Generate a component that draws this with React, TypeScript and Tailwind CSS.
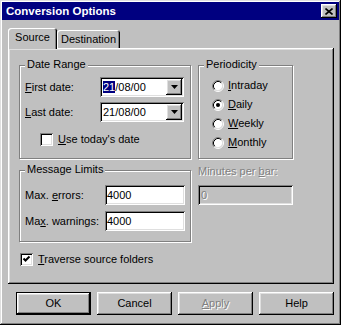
import React from "react";

const raised =
  "shadow-[inset_-1px_-1px_#000,inset_1px_1px_#fff,inset_-2px_-2px_#808080,inset_2px_2px_#dfdfdf]";
const sunken =
  "shadow-[inset_1px_1px_#808080,inset_-1px_-1px_#fff,inset_2px_2px_#000,inset_-2px_-2px_#dfdfdf]";
const disabledText = "text-[#808080] [text-shadow:1px_1px_0_#fff]";

const Group = ({
  label,
  className,
  children,
}: {
  label: string;
  className: string;
  children: React.ReactNode;
}) => (
  <div
    className={`relative border border-[#808080] shadow-[inset_1px_1px_#fff,1px_1px_#fff] ${className}`}
  >
    <span className="absolute left-[5px] -top-[8px] bg-[#c0c0c0] px-[2px] whitespace-nowrap">
      {label}
    </span>
    {children}
  </div>
);

const Combo = ({ children }: { children: React.ReactNode }) => (
  <div className={`w-[84px] h-[20px] bg-white ${sunken} flex items-center p-[2px]`}>
    <div className="flex-1 pl-[1px] whitespace-nowrap">{children}</div>
    <div className={`w-[16px] h-[16px] bg-[#c0c0c0] ${raised} flex items-center justify-center`}>
      <svg width="7" height="4" viewBox="0 0 7 4">
        <path d="M0 0H7L3.5 4Z" fill="#000" />
      </svg>
    </div>
  </div>
);

const Checkbox = ({ checked }: { checked?: boolean }) => (
  <div className={`w-[13px] h-[13px] bg-white ${sunken} shrink-0 relative`}>
    {checked && (
      <svg className="absolute left-0 top-0" width="13" height="13" viewBox="0 0 13 13">
        <path d="M3.5 5.5L5.5 7.5L9.5 3.5" stroke="#000" strokeWidth="2" fill="none" />
      </svg>
    )}
  </div>
);

const Radio = ({ checked }: { checked?: boolean }) => (
  <svg width="12" height="12" viewBox="0 0 12 12" className="shrink-0">
    <circle cx="6" cy="6" r="4.5" fill="#fff" />
    <path d="M2.11 9.89A5.5 5.5 0 0 1 9.89 2.11" stroke="#808080" fill="none" />
    <path d="M9.89 2.11A5.5 5.5 0 0 1 2.11 9.89" stroke="#fff" fill="none" />
    <path d="M2.82 9.18A4.5 4.5 0 0 1 9.18 2.82" stroke="#000" fill="none" />
    <path d="M9.18 2.82A4.5 4.5 0 0 1 2.82 9.18" stroke="#dfdfdf" fill="none" />
    {checked && <circle cx="6" cy="6" r="2" fill="#000" />}
  </svg>
);

const RadioRow = ({ first, rest, checked }: { first: string; rest: string; checked?: boolean }) => (
  <div className="h-[19px] flex items-center gap-[4px]">
    <Radio checked={checked} />
    <span>
      <u>{first}</u>
      {rest}
    </span>
  </div>
);

const Button = ({ children, isDefault }: { children: React.ReactNode; isDefault?: boolean }) => (
  <div
    className={`w-[75px] h-[23px] flex items-center justify-center ${raised} ${
      isDefault ? "border border-black" : ""
    }`}
  >
    {children}
  </div>
);

export default function App() {
  return (
    <div
      className={`w-[341px] h-[325px] bg-[#c0c0c0] font-['Liberation_Sans',Arial,sans-serif] text-[11px] leading-[13px] text-black pt-[2px] px-[2px] flex flex-col shadow-[inset_-1px_-1px_#000,inset_1px_1px_#dfdfdf,inset_-2px_-2px_#808080,inset_2px_2px_#fff]`}
    >
      {/* title bar */}
      <div className="h-[18px] bg-[#000080] flex items-center justify-between pl-[4px] pr-[2px]">
        <span className="text-white font-bold text-[11.5px]">Conversion Options</span>
        <div className={`w-[16px] h-[14px] bg-[#c0c0c0] ${raised} flex items-center justify-center`}>
          <svg width="8" height="7" viewBox="0 0 8 7">
            <path d="M0.5 0.5L7.5 6.5M7.5 0.5L0.5 6.5" stroke="#000" strokeWidth="1.6" />
          </svg>
        </div>
      </div>

      <div className="pl-[6px] pr-[5px] mt-[8px]">
        {/* tabs */}
        <div className="flex items-end h-[20px]">
          <div className="relative z-10 w-[49px] h-[21px] -mb-[1px] bg-[#c0c0c0] rounded-t-[3px] shadow-[inset_1px_1px_#fff,inset_-1px_0_#000,inset_-2px_0_#808080] flex justify-center pt-[3px]">
            Source
          </div>
          <div className="w-[63px] h-[18px] rounded-t-[3px] shadow-[inset_1px_1px_#fff,inset_-1px_0_#000,inset_-2px_0_#808080] flex justify-center pt-[3px]">
            Destination
          </div>
        </div>

        {/* panel */}
        <div className={`h-[236px] ${raised} pl-[11px] pt-[17px]`}>
          <div className="flex gap-[7px]">
            <Group label="Date Range" className="w-[172px] h-[94px] px-[5px] pt-[11px]">
              <div className="flex items-center">
                <span className="w-[75px]">
                  <u>F</u>irst date:
                </span>
                <Combo>
                  <span className="bg-[#000080] text-white">21</span>/08/00
                </Combo>
              </div>
              <div className="flex items-center mt-[5px]">
                <span className="w-[75px]">
                  <u>L</u>ast date:
                </span>
                <Combo>21/08/00</Combo>
              </div>
              <div className="flex items-center gap-[5px] ml-[15px] mt-[11px]">
                <Checkbox />
                <span>
                  <u>U</u>se today's date
                </span>
              </div>
            </Group>
            <Group label="Periodicity" className="w-[95px] h-[94px] pl-[13px] pt-[10px]">
              <RadioRow first="I" rest="ntraday" />
              <RadioRow first="D" rest="aily" checked />
              <RadioRow first="W" rest="eekly" />
              <RadioRow first="M" rest="onthly" />
            </Group>
          </div>

          <div className="flex gap-[7px] mt-[11px]">
            <Group label="Message Limits" className="w-[172px] h-[72px] px-[5px] pt-[14px]">
              <div className="flex items-center">
                <span className="w-[80px]">
                  Max. <u>e</u>rrors:
                </span>
                <div className={`w-[80px] h-[20px] bg-white ${sunken} pl-[2px] flex items-center`}>
                  4000
                </div>
              </div>
              <div className="flex items-center mt-[6px]">
                <span className="w-[80px]">
                  Ma<u>x</u>. warnings:
                </span>
                <div className={`w-[80px] h-[20px] bg-white ${sunken} pl-[2px] flex items-center`}>
                  4000
                </div>
              </div>
            </Group>
            <div className="w-[95px] -mt-[5px] flex flex-col">
              <span className={disabledText}>
                Minutes per <u>b</u>ar:
              </span>
              <div className={`mt-[7px] h-[20px] ${sunken} pl-[3px] flex items-center ${disabledText}`}>
                0
              </div>
            </div>
          </div>

          <div className="flex items-center gap-[5px] mt-[11px] ml-[1px]">
            <Checkbox checked />
            <span>
              <u>T</u>raverse source folders
            </span>
          </div>
        </div>

        {/* buttons */}
        <div className="flex justify-end gap-[6px] mt-[8px]">
          <Button isDefault>OK</Button>
          <Button>Cancel</Button>
          <Button>
            <span className={disabledText}>
              <u>A</u>pply
            </span>
          </Button>
          <Button>Help</Button>
        </div>
      </div>
    </div>
  );
}
